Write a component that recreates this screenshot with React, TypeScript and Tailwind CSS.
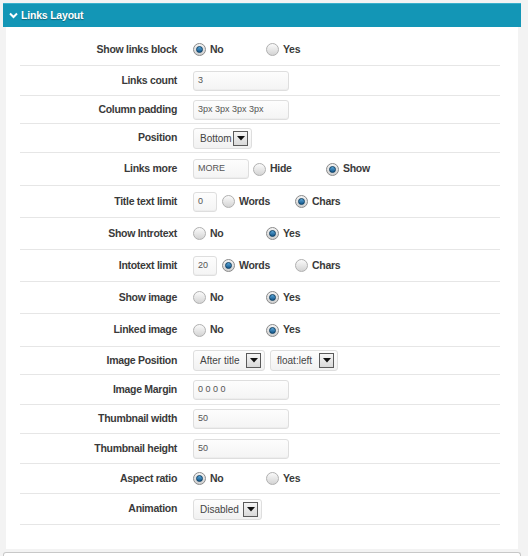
import React from "react";

const font = { fontFamily: '"Liberation Sans", Arial, sans-serif' };

function Radio({ checked }: { checked?: boolean }) {
  if (checked) {
    return (
      <span className="relative inline-flex h-[13px] w-[13px] shrink-0 items-center justify-center rounded-full border border-[#8a8a8a] bg-gradient-to-b from-[#f4f4f4] to-[#cfcfcf]">
        <span className="h-[7px] w-[7px] rounded-full border border-[#0d3f63] bg-gradient-to-b from-[#5aa6d8] to-[#12588c]" />
      </span>
    );
  }
  return (
    <span className="inline-block h-[13px] w-[13px] shrink-0 rounded-full border border-[#b0b0b0] bg-gradient-to-b from-[#fafafa] to-[#d4d4d4]" />
  );
}

function Opt({ label, checked }: { label: string; checked?: boolean }) {
  return (
    <span className="flex w-[73px] items-center gap-[4px]">
      <Radio checked={checked} />
      <span className="text-[10.5px] font-bold tracking-[-0.3px] text-[#3a3a3a]">{label}</span>
    </span>
  );
}

function Input({ value, w }: { value: string; w: string }) {
  return (
    <span
      className={`flex h-[20px] ${w} items-center rounded-[3px] border border-[#dedede] bg-gradient-to-b from-[#fdfdfd] to-[#f4f4f4] pl-[4px] text-[9px] text-[#555] shadow-[inset_0_-1px_1px_rgba(0,0,0,0.03)]`}
    >
      {value}
    </span>
  );
}

function Select({ value, w }: { value: string; w: string }) {
  return (
    <span
      className={`flex h-[21px] ${w} items-center justify-between rounded-[3px] border border-[#dedede] bg-gradient-to-b from-[#fdfdfd] to-[#f1f1f1] pl-[6px] pr-[3px] text-[10px] text-[#444]`}
    >
      <span>{value}</span>
      <span className="flex h-[15px] w-[15px] items-center justify-center border border-[#5a5a5a] bg-gradient-to-b from-[#f5f5f5] to-[#d9d9d9]">
        <svg width="8" height="5" viewBox="0 0 8 5">
          <path d="M0 0 L8 0 L4 4.5 Z" fill="#111" />
        </svg>
      </span>
    </span>
  );
}

function Row({ label, h, children }: { label: string; h: string; children: React.ReactNode }) {
  return (
    <div className={`flex ${h} items-center border-b border-[#e6e6e6]`}>
      <div className="w-[157px] shrink-0 text-right text-[10.5px] font-bold tracking-[-0.3px] text-[#3a3a3a]">{label}</div>
      <div className="ml-[16px] flex items-center">{children}</div>
    </div>
  );
}

export default function App() {
  return (
    <div className="min-h-[556px] bg-[#f3f3f3] pl-[3px] pr-[7px] pt-[3px]" style={font}>
      <div className="flex h-[24px] items-center gap-[3px] border-t border-[#39b0cc] bg-[#1396b6] pl-[6px] text-[10.5px] font-bold tracking-[-0.2px] text-white [text-shadow:0_1px_1px_rgba(0,0,0,0.35)]">
        <svg width="9" height="7" viewBox="0 0 9 7">
          <path d="M1 1.5 L4.5 5 L8 1.5" fill="none" stroke="#fff" strokeWidth="2" />
        </svg>
        <span>Links Layout</span>
      </div>
      <div className="mx-[3px] bg-white pb-[24px] pl-[14px] pr-[18px] pt-[7px]">
        <Row label="Show links block" h="h-[32px]">
          <Opt label="No" checked />
          <Opt label="Yes" />
        </Row>
        <Row label="Links count" h="h-[30px]">
          <Input value="3" w="w-[96px]" />
        </Row>
        <Row label="Column padding" h="h-[28px]">
          <Input value="3px 3px 3px 3px" w="w-[96px]" />
        </Row>
        <Row label="Position" h="h-[29px]">
          <Select value="Bottom" w="w-[59px]" />
        </Row>
        <Row label="Links more" h="h-[33px]">
          <Input value="MORE" w="w-[56px]" />
          <span className="ml-[4px] flex">
            <Opt label="Hide" />
            <Opt label="Show" checked />
          </span>
        </Row>
        <Row label="Title text limit" h="h-[32px]">
          <Input value="0" w="w-[24px]" />
          <span className="ml-[5px] flex">
            <Opt label="Words" />
            <Opt label="Chars" checked />
          </span>
        </Row>
        <Row label="Show Introtext" h="h-[32px]">
          <Opt label="No" />
          <Opt label="Yes" checked />
        </Row>
        <Row label="Intotext limit" h="h-[32px]">
          <Input value="20" w="w-[24px]" />
          <span className="ml-[5px] flex">
            <Opt label="Words" checked />
            <Opt label="Chars" />
          </span>
        </Row>
        <Row label="Show image" h="h-[32px]">
          <Opt label="No" />
          <Opt label="Yes" checked />
        </Row>
        <Row label="Linked image" h="h-[33px]">
          <Opt label="No" />
          <Opt label="Yes" checked />
        </Row>
        <Row label="Image Position" h="h-[28px]">
          <Select value="After title" w="w-[72px]" />
          <span className="ml-[5px]">
            <Select value="float:left" w="w-[68px]" />
          </span>
        </Row>
        <Row label="Image Margin" h="h-[30px]">
          <Input value="0 0 0 0" w="w-[96px]" />
        </Row>
        <Row label="Thumbnail width" h="h-[29px]">
          <Input value="50" w="w-[96px]" />
        </Row>
        <Row label="Thumbnail height" h="h-[30px]">
          <Input value="50" w="w-[96px]" />
        </Row>
        <Row label="Aspect ratio" h="h-[30px]">
          <Opt label="No" checked />
          <Opt label="Yes" />
        </Row>
        <Row label="Animation" h="h-[31px]">
          <Select value="Disabled" w="w-[69px]" />
        </Row>
      </div>
      <div className="mt-[3px] h-[6px] rounded-t-[3px] border border-b-0 border-[#c8c8c8] bg-white" />
    </div>
  );
}
